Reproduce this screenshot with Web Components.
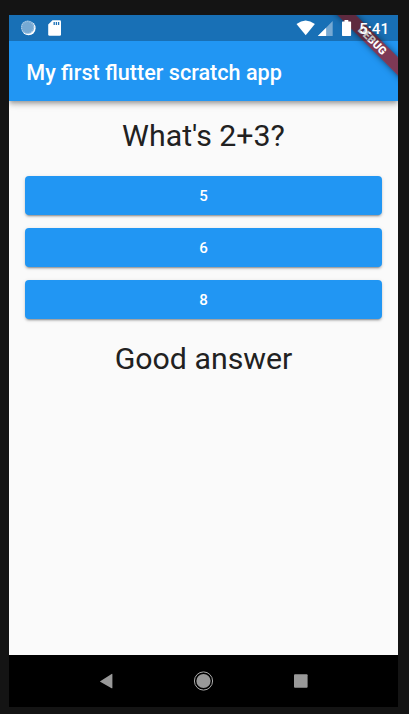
<!DOCTYPE html>
<html lang="en">
<head>
<meta charset="utf-8">
<title>My first flutter scratch app</title>
<style>
html, body { margin: 0; height: 100%; }
body { background: #141414; font-family: Roboto, "Liberation Sans", sans-serif; overflow: hidden; }
</style>
</head>
<body>
<phone-screen>
  <status-bar slot="top">5:41</status-bar>
  <app-bar slot="top">My first flutter scratch app</app-bar>
  <debug-banner slot="banner">DEBUG</debug-banner>
  <quiz-text>What's 2+3?</quiz-text>
  <answer-list>
    <answer-button>5</answer-button>
    <answer-button>6</answer-button>
    <answer-button>8</answer-button>
  </answer-list>
  <quiz-text>Good answer</quiz-text>
  <nav-bar slot="bottom"></nav-bar>
</phone-screen>
<script>
const define = (name, html) => customElements.define(name, class extends HTMLElement {
  constructor() {
    super();
    const t = document.createElement('template');
    t.innerHTML = html;
    this.attachShadow({ mode: 'open' }).append(t.content.cloneNode(true));
  }
});

define('phone-screen', `<style>
:host { display: block; box-sizing: border-box; height: 714px; width: 409px; padding: 15px 11px 7px 9px; }
.screen { position: relative; display: flex; flex-direction: column; height: 692px; background: #fafafa; overflow: hidden; }
main { flex: 1; display: flex; flex-direction: column; padding: 15px 16px 0; }
</style><div class="screen"><slot name="top"></slot><main><slot></slot></main><slot name="bottom"></slot><slot name="banner"></slot></div>`);

// The translucent status bar darkens both the app bar and the banner beneath it.
define('status-bar', `<style>
:host { display: flex; align-items: center; justify-content: space-between; height: 26px; flex: none; color: #fff; position: relative; z-index: 3; background: rgba(0,0,0,.25); }
svg { display: block; }
.clock { font-size: 15.1px; font-weight: 500; line-height: 26px; padding: 1px 9px 0 0; box-sizing: border-box; height: 26px; }
.right { display: flex; }
.right svg { margin-right: -1px; }
</style>
<svg width="70" height="26"><circle cx="19.6" cy="13.2" r="7" fill="#fff"/><circle cx="18.6" cy="12.2" r="6.6" fill="#76a9d3"/><circle cx="18.6" cy="12.4" r="6" fill="none" stroke="#a9cae5" stroke-width="1.2" stroke-dasharray="1 1.1"/>
<path d="M43.5 5.2h7.2q1.3 0 1.3 1.3v13q0 1.3-1.3 1.3h-10.1q-1.4 0-1.4-1.3V9.5z" fill="#fff"/><path d="M45.2 7v3M47.4 7v3M49.6 7v3" stroke="#1b70b7" stroke-width="1.3"/></svg>
<div class="right"><svg width="65" height="26"><g transform="translate(1.5)"><path d="M0 9.1Q9.1 1.8 18.4 9.1L9.2 20.2z" fill="#fff"/><path d="M36.2 6v15H21.3z" fill="#76a9d3"/><path d="M29.6 12.8V21h-8.3z" fill="#fff"/><path d="M48 5h3.8v1.6h2.1q.7 0 .7.7v13q0 .7-.7.7h-7.7q-.7 0-.7-.7v-13q0-.7.7-.7H48z" fill="#fff"/></g></svg><span class="clock"><slot></slot></span></div>`);

define('app-bar', `<style>
:host { display: flex; align-items: center; flex: none; box-sizing: border-box; height: 86px; margin-top: -26px; padding: 28px 0 0 17.3px; background: #2196f3; color: #fff; font-size: 21.6px; font-weight: 500; white-space: nowrap; box-shadow: 0 2px 4px -1px rgba(0,0,0,.26), 0 4px 5px rgba(0,0,0,.15), 0 1px 10px rgba(0,0,0,.12); }
</style><span><slot></slot></span>`);

define('debug-banner', `<style>
:host { position: absolute; z-index: 2; left: 312.5px; top: 18.5px; width: 100px; height: 13.4px; transform: rotate(45deg); background: rgba(156,28,36,.76); box-shadow: 0 0 6px rgba(0,0,0,.5); color: #fff; font-size: 11px; line-height: 14px; font-weight: 900; text-align: center; }
</style><slot></slot>`);

define('quiz-text', `<style>
:host { display: block; text-align: center; font-size: 30.3px; line-height: 40px; color: #212121; }
</style><slot></slot>`);

define('answer-list', `<style>
:host { display: flex; flex-direction: column; gap: 13px; margin: 20px 0 20px; }
</style><slot></slot>`);

define('answer-button', `<style>
:host { display: flex; align-items: center; justify-content: center; height: 39px; border-radius: 4px; background: #2196f3; color: #fff; font-size: 15.1px; font-weight: 500; box-shadow: 0 3px 1px -2px rgba(0,0,0,.2), 0 2px 2px rgba(0,0,0,.14), 0 1px 4px rgba(0,0,0,.12); }
</style><slot></slot>`);

define('nav-bar', `<style>
:host { display: block; height: 52px; flex: none; background: #000; }
svg { display: block; }
</style><svg width="389" height="52" fill="#999"><path d="M91.2 26.2 102.6 19q.8-.4.8.4v13.4q0 .8-.8.4L91.2 26.8q-.5-.3 0-.6z"/><circle cx="194.5" cy="26" r="7.1"/><circle cx="194.5" cy="26" r="9.1" fill="none" stroke="#aaa" stroke-width="1"/><rect x="285" y="19.2" width="13.6" height="13.6" rx="1"/></svg>`);
</script>
</body>
</html>
